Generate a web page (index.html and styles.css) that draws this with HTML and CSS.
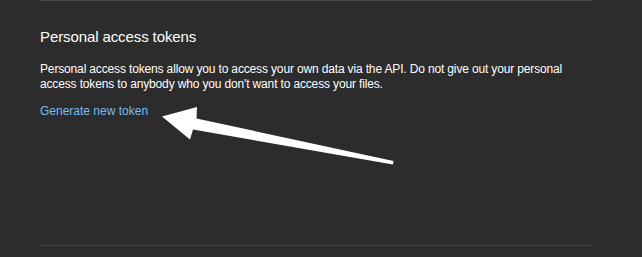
FILE: index.html
```html
<!DOCTYPE html>
<html lang="en">
<head>
    <meta charset="UTF-8">
    <title>Personal access tokens</title>
    <link rel="stylesheet" href="styles.css">
</head>
<body>
    <main class="page">
        <section class="settings-section">
            <h2 class="section-title">Personal access tokens</h2>
            <p class="section-text">Personal access tokens allow you to access your own data via the API. Do not give out your personal access tokens to anybody who you don't want to access your files.</p>
            <a class="section-link" href="#">Generate new token</a>
        </section>
        <div class="section-end"></div>
    </main>

    <!-- Стрелка-аннотация поверх контента -->
    <svg class="annotation" width="642" height="257" viewBox="0 0 642 257">
        <polygon points="162,116.5 197,107 196.5,118.5 393.5,161 393,164.5 193,129.5 190,139.5" fill="#ffffff"/>
    </svg>
</body>
</html>
```

FILE: styles.css
```css
:root {
    --bg-color: #2c2c2c;
    --line-color: #444444;
    --text-color: #ffffff;
    --link-color: #74bdf5;
}

* {
    margin: 0;
    padding: 0;
    box-sizing: border-box;
}

html, body {
    height: 100%;
}

body {
    background: var(--bg-color);
    color: var(--text-color);
    font-family: 'Liberation Sans', Arial, sans-serif;
    border-right: 1px solid #333333;
    overflow: hidden;
}

.page {
    margin: 0 48px 0 40px;
}

.settings-section {
    border-top: 1px solid var(--line-color);
    padding-top: 26px;
    height: 245px;
}

.section-title {
    font-size: 15px;
    line-height: 20px;
    font-weight: 400;
    letter-spacing: -0.1px;
    margin-bottom: 15px;
}

.section-text {
    font-size: 12px;
    line-height: 15px;
    letter-spacing: -0.15px;
    margin-bottom: 9px;
}

.section-link {
    display: inline-block;
    font-size: 12px;
    line-height: 15px;
    color: var(--link-color);
    text-decoration: none;
}

.section-end {
    border-top: 1px solid var(--line-color);
}

.annotation {
    position: absolute;
    left: 0;
    top: 0;
}
```
